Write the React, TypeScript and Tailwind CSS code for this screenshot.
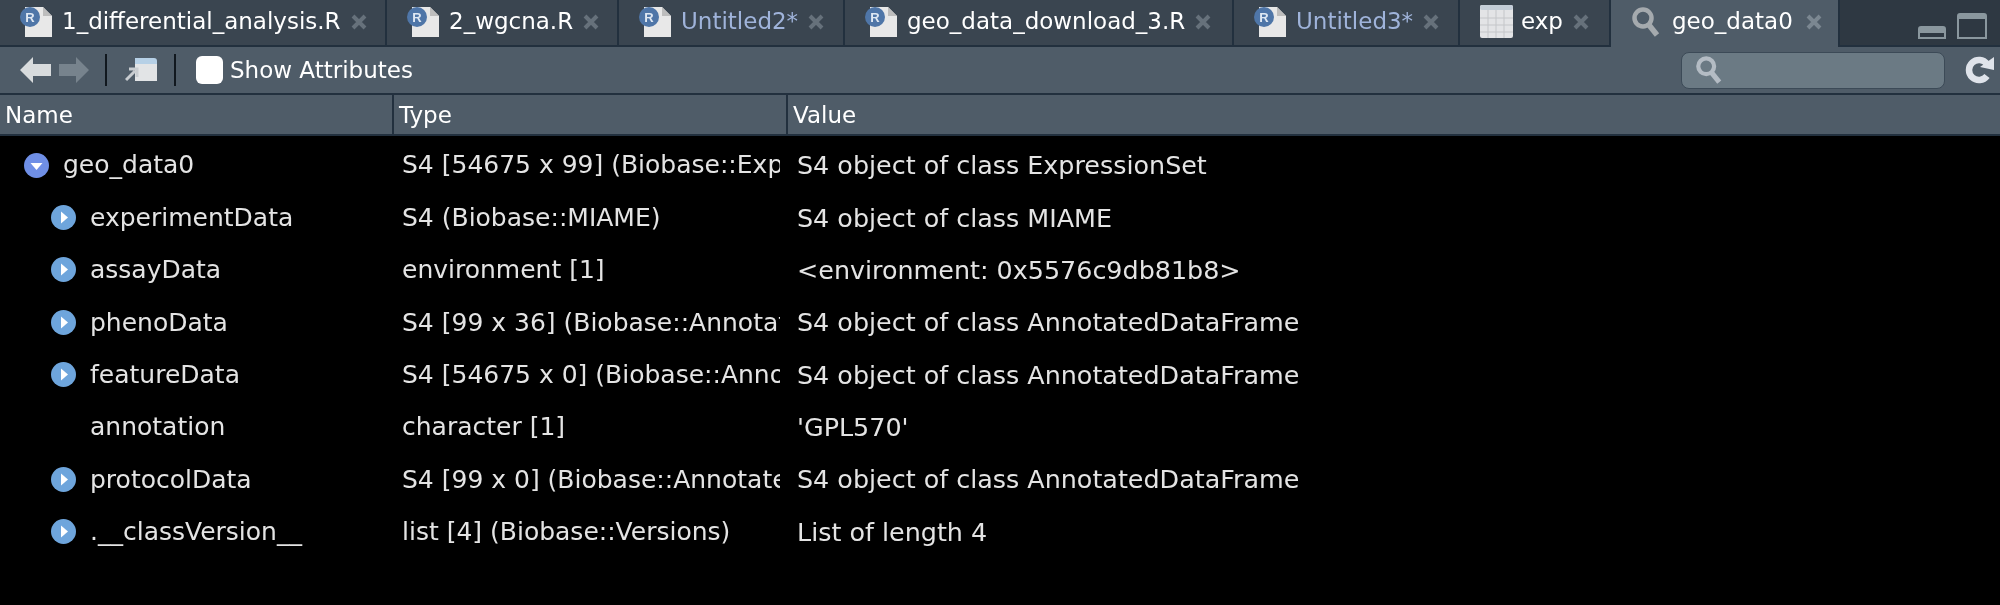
const font = { fontFamily: '"DejaVu Sans", sans-serif' };

function RDocIcon() {
  return (
    <svg width="34" height="32" viewBox="0 0 34 32" className="shrink-0">
      <path d="M5 1h18l9 9v21H5z" fill="#e8e8e8" />
      <path d="M23 1l9 9h-9z" fill="#bdbdbd" />
      <circle cx="10" cy="11" r="10" fill="#4f76a8" />
      <text x="10" y="16" textAnchor="middle" fontSize="13" fontWeight="700" fill="#dfe8f3" fontFamily="Liberation Sans">R</text>
    </svg>
  );
}

function TableIcon() {
  return (
    <svg width="33" height="33" viewBox="0 0 33 33" className="shrink-0">
      <rect x="0" y="0" width="33" height="33" rx="2" fill="#e3e4e6" />
      <rect x="0" y="0" width="33" height="5" rx="2" fill="#c3cdd8" />
      <path d="M8 5v28M16 5v28M24 5v28M0 13h33M0 20h33M0 27h33" stroke="#c4c6c9" strokeWidth="1" />
    </svg>
  );
}

function SearchIcon({ color, size }: { color: string; size: number }) {
  return (
    <svg width={size} height={size} viewBox="0 0 28 30" className="shrink-0">
      <circle cx="11" cy="11" r="8.5" fill="none" stroke={color} strokeWidth="4.5" />
      <path d="M17 18l8 10" stroke={color} strokeWidth="5.5" />
    </svg>
  );
}

function CloseIcon({ active }: { active?: boolean }) {
  return (
    <svg width="16" height="16" viewBox="0 0 16 16" className="shrink-0">
      <path d="M2 2l12 12M14 2L2 14" stroke={active ? "#7b8791" : "#66717b"} strokeWidth="4" />
    </svg>
  );
}

function Tab({ name, width, pending, kind }: { name: string; width: string; pending?: boolean; kind: "r" | "table" }) {
  return (
    <div className={`${width} h-full flex items-center pl-5 border-r-2 border-b-2 border-[#22303e] bg-[#3a4550] pb-[2px]`}>
      {kind === "r" ? <RDocIcon /> : <TableIcon />}
      <span className={`ml-2 text-[23px] whitespace-nowrap ${pending ? "text-[#9fb3da]" : "text-white"}`}>{name}</span>
      <span className="ml-[10px]"><CloseIcon /></span>
    </div>
  );
}

function Disclosure({ open }: { open?: boolean }) {
  return (
    <svg width="25" height="25" viewBox="0 0 25 25" className="shrink-0">
      <circle cx="12.5" cy="12.5" r="12.5" fill={open ? "#6f8fe6" : "#6ea5dc"} />
      {open ? <path d="M6.5 10h12l-6 7z" fill="#fff" /> : <path d="M10 6.5l7 6-7 6z" fill="#fff" />}
    </svg>
  );
}

const rows = [
  { name: "geo_data0", type: "S4 [54675 x 99] (Biobase::ExpressionSet)", value: "S4 object of class ExpressionSet", top: true, icon: true },
  { name: "experimentData", type: "S4 (Biobase::MIAME)", value: "S4 object of class MIAME", icon: true },
  { name: "assayData", type: "environment [1]", value: "<environment: 0x5576c9db81b8>", icon: true },
  { name: "phenoData", type: "S4 [99 x 36] (Biobase::AnnotatedDataFrame)", value: "S4 object of class AnnotatedDataFrame", icon: true },
  { name: "featureData", type: "S4 [54675 x 0] (Biobase::AnnotatedDataFrame)", value: "S4 object of class AnnotatedDataFrame", icon: true },
  { name: "annotation", type: "character [1]", value: "'GPL570'" },
  { name: "protocolData", type: "S4 [99 x 0] (Biobase::AnnotatedDataFrame)", value: "S4 object of class AnnotatedDataFrame", icon: true },
  { name: ".__classVersion__", type: "list [4] (Biobase::Versions)", value: "List of length 4", icon: true },
];

function App() {
  return (
    <div className="w-[2000px] h-[605px] overflow-hidden bg-black flex flex-col blur-[0.4px]" style={font}>
      {/* Tab strip */}
      <div className="h-[47px] flex bg-[#2e3842] shrink-0">
        <Tab name="1_differential_analysis.R" width="w-[387px]" kind="r" />
        <Tab name="2_wgcna.R" width="w-[232px]" kind="r" />
        <Tab name="Untitled2*" width="w-[226px]" kind="r" pending />
        <Tab name="geo_data_download_3.R" width="w-[389px]" kind="r" />
        <Tab name="Untitled3*" width="w-[226px]" kind="r" pending />
        <Tab name="exp" width="w-[151px]" kind="table" />
        <div className="w-[229px] h-full flex items-center pl-5 bg-[#4f5c68] border-r-2 border-[#22303e] pb-1">
          <SearchIcon color="#a5aaae" size={30} />
          <span className="ml-[11px] text-[23px] text-white">geo_data0</span>
          <span className="ml-[13px]"><CloseIcon active /></span>
        </div>
        <div className="flex-1 border-b-2 border-[#22303e] flex items-end justify-end gap-[10px] pr-[13px] pb-[5px]">
          <svg width="30" height="15" viewBox="0 0 30 15">
            <path d="M1 14V4q0-3 3-3h22q3 0 3 3v10zM3 8v4h24V8z" fill="#8a979e" fillRule="evenodd" />
          </svg>
          <svg width="30" height="28" viewBox="0 0 30 28">
            <path d="M0 27V4q0-3 3-3h24q3 0 3 3v23zM2 7v18h26V7z" fill="#8a979e" fillRule="evenodd" />
          </svg>
        </div>
      </div>

      {/* Toolbar */}
      <div className="h-[48px] flex items-center bg-[#4f5c68] border-b-2 border-[#22303e] shrink-0 pl-5">
        <svg width="70" height="26" viewBox="0 0 70 26" className="shrink-0">
          <path d="M0 13L13 0v7h18v12H13v7z" fill="#d8dbdd" />
          <path d="M69 13L56 0v7H39v12h17v7z" fill="#77838d" />
        </svg>
        <div className="ml-[15px] w-[2px] h-[32px] bg-[#11181f]" />
        <svg width="32" height="24" viewBox="0 0 32 24" className="ml-[18px] shrink-0">
          <path d="M10 0h19q3 0 3 3v3H10z" fill="#b6d0e6" />
          <path d="M10 6h22v17H10z" fill="#e2e4e6" />
          <path d="M1 22l9-9M4 11h8v8" fill="none" stroke="#c8ccd0" strokeWidth="3" />
        </svg>
        <div className="ml-[17px] w-[2px] h-[32px] bg-[#11181f]" />
        <div className="ml-[20px] w-[27px] h-[28px] rounded-md bg-white shrink-0" />
        <span className="ml-[7px] text-[23px] text-white whitespace-nowrap">Show Attributes</span>
        <div className="ml-auto w-[264px] h-[37px] rounded-lg bg-[#6b7a84] border border-[#3c4a57] flex items-center pl-[13px]">
          <SearchIcon color="#b4bcc4" size={28} />
        </div>
        <svg width="30" height="32" viewBox="0 0 30 32" className="ml-[20px] mr-[5px] shrink-0">
          <path d="M22 22a10 10 0 1 1 0-12" fill="none" stroke="#dfe3ea" strokeWidth="6.5" />
          <path d="M15 13L29 3v13z" fill="#dfe3ea" />
        </svg>
      </div>

      {/* Column headers */}
      <div className="h-[41px] grid grid-cols-[392px_394px_1fr] bg-[#4f5c68] border-b-2 border-[#22303e] text-white text-[23px] shrink-0">
        <div className="flex items-center pl-[5px] pt-[2px]">Name</div>
        <div className="flex items-center pl-[5px] pt-[2px] border-l-2 border-[#22303e]">Type</div>
        <div className="flex items-center pl-[5px] pt-[2px] border-l-2 border-[#22303e]">Value</div>
      </div>

      {/* Object tree */}
      <div className="flex flex-col text-[#e4e4e4] text-[25px] pt-[3px]">
        {rows.map((row) => (
          <div key={row.name} className="h-[52.4px] grid grid-cols-[392px_388px_1fr] items-center shrink-0">
            <div className={`flex items-center ${row.top ? "pl-[24px]" : "pl-[51px]"}`}>
              {row.icon ? <Disclosure open={row.top} /> : <div className="w-[25px]" />}
              <span className="ml-[14px] whitespace-nowrap">{row.name}</span>
            </div>
            <div className="pl-[10px] overflow-hidden whitespace-nowrap">{row.type}</div>
            <div className="pl-[17px] whitespace-nowrap text-[25.4px]">{row.value}</div>
          </div>
        ))}
      </div>
    </div>
  );
}

export default App;
